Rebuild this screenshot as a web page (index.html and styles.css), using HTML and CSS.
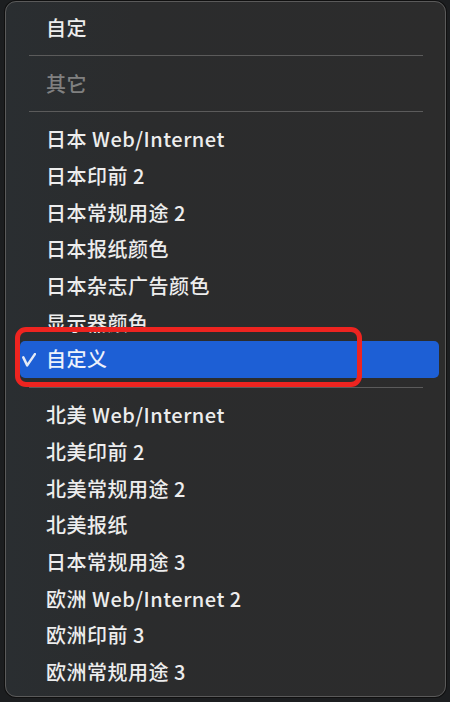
FILE: index.html
```html
<!DOCTYPE html>
<html lang="zh-CN">
<head>
<meta charset="utf-8">
<title>颜色设置菜单</title>
<link rel="stylesheet" href="styles.css">
</head>
<body>
<div class="menu">
  <div class="item">自定</div>
  <div class="sep"></div>
  <div class="item disabled">其它</div>
  <div class="sep"></div>
  <div class="item">日本 Web/Internet</div>
  <div class="item">日本印前 2</div>
  <div class="item">日本常规用途 2</div>
  <div class="item">日本报纸颜色</div>
  <div class="item">日本杂志广告颜色</div>
  <div class="item">显示器颜色</div>
  <div class="item selected">
    <svg class="check" width="14" height="14" viewBox="0 0 14 14"><path d="M1.3 4.4 L5.2 12.4 L12.9 1.1" fill="none" stroke="#e4eaf6" stroke-width="2.5" stroke-linecap="round" stroke-linejoin="round"/></svg>
    <span>自定义</span>
  </div>
  <div class="sep"></div>
  <div class="item">北美 Web/Internet</div>
  <div class="item">北美印前 2</div>
  <div class="item">北美常规用途 2</div>
  <div class="item">北美报纸</div>
  <div class="item">日本常规用途 3</div>
  <div class="item">欧洲 Web/Internet 2</div>
  <div class="item">欧洲印前 3</div>
  <div class="item">欧洲常规用途 3</div>
  <div class="annotation"></div>
</div>
</body>
</html>
```
FILE: styles.css
```css
html, body {
  margin: 0;
  padding: 0;
}
body {
  width: 450px;
  height: 702px;
  background: #1c1e20;
  padding: 1px 4px 5px 5px;
  box-sizing: border-box;
  font-family: "Noto Sans CJK SC", "Noto Sans", sans-serif;
  overflow: hidden;
}
.menu {
  position: relative;
  height: 696px;
  box-sizing: border-box;
  border: 1px solid #5a5a5a;
  border-radius: 11px;
  background: linear-gradient(90deg, #2a2e31 0%, #2b2c2d 30%, #2c2c2c 100%);
  padding: 7.65px 6px 6px 13px;
  box-shadow: 0 0 0 1px #101010;
  display: flex;
  flex-direction: column;
}
.item {
  height: 36.7px;
  flex: none;
  display: flex;
  align-items: center;
  padding-left: 27px;
  color: #ededed;
  font-size: 20px;
  font-weight: 500;
  letter-spacing: 0.5px;
  line-height: 1;
  white-space: nowrap;
  position: relative;
}
.item.disabled {
  color: #808080;
}
.item.selected {
  background: #1d5fd5;
  border-radius: 5px;
  margin-left: 1px;
  padding-left: 26px;
  color: #eef2fb;
}
.check {
  position: absolute;
  left: 2px;
  top: 11.5px;
}
.sep {
  height: 19px;
  flex: none;
  display: flex;
  align-items: center;
  margin: 0 16px 0 10px;
}
.sep::before {
  content: "";
  display: block;
  height: 1px;
  width: 100%;
  background: #5b5b5b;
}
.annotation {
  position: absolute;
  left: 9px;
  top: 325px;
  width: 347px;
  height: 60px;
  box-sizing: border-box;
  border: 5px solid #ee2420;
  border-radius: 11px;
}
```
